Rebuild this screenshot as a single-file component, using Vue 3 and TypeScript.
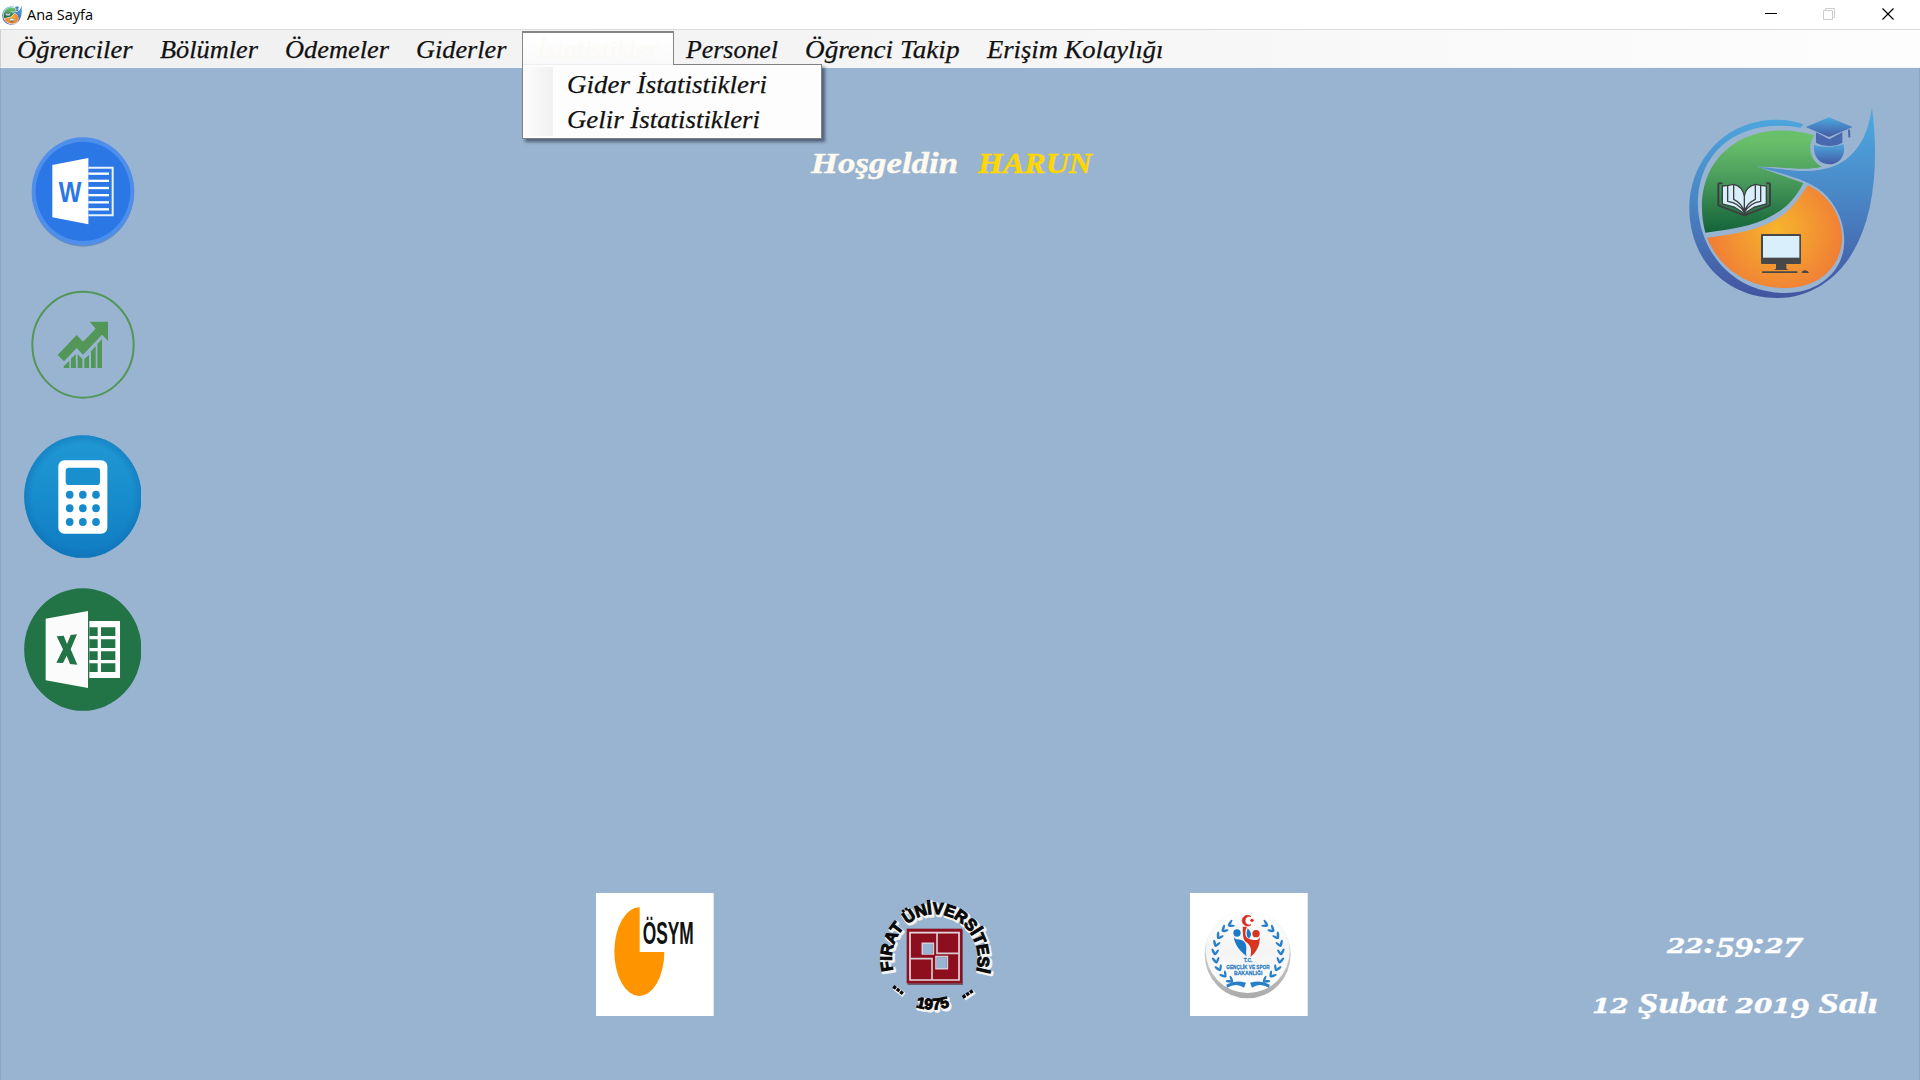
<script setup lang="ts">
import { h, ref } from 'vue'

interface Label { text: string; width: number; gap: number }

interface CaptionProps {
  text: string
  width: number
  size: number
  height: number
  baseline: number
  oldstyle?: boolean
}

// Lowered numerals: 0, 1 and 2 sit at x-height, the others hang under the baseline.
function glyphs(text: string, size: number) {
  let shift = 0
  return text.split(/(\d)/).filter(Boolean).map((part) => {
    const low = /[3-579]/.test(part)
    const small = /[0-2]/.test(part)
    const target = low ? size * 0.16 : 0
    const dy = target - shift
    shift = target
    return h('tspan', {
      dy,
      'font-size': small ? size * 0.71 : size,
      style: small ? 'font-family:"DejaVu Serif",serif' : undefined,
    }, part)
  })
}

// A label whose text is fitted to a fixed width.
const Caption = (p: CaptionProps) =>
  h('svg', { width: p.width, height: p.height, class: 'caption', style: 'overflow:visible;display:block;flex:none' }, [
    h('text', {
      x: 0, y: p.baseline, 'font-size': p.size, textLength: p.width,
      lengthAdjust: 'spacingAndGlyphs', fill: 'currentColor', 'xml:space': 'preserve',
    }, p.oldstyle ? glyphs(p.text, p.size) : p.text),
  ])
Caption.props = ['text', 'width', 'size', 'height', 'baseline', 'oldstyle']

const leading: Label[] = [
  { text: 'Öğrenciler', width: 115.5, gap: 15.5 },
  { text: 'Bölümler', width: 98, gap: 27.5 },
  { text: 'Ödemeler', width: 104, gap: 27 },
  { text: 'Giderler', width: 90.5, gap: 27.5 },
]
const trailing: Label[] = [
  { text: 'Personel', width: 92, gap: 12.7 },
  { text: 'Öğrenci Takip', width: 154.5, gap: 27.3 },
  { text: 'Erişim Kolaylığı', width: 176.5, gap: 27.5 },
]
const submenu = [
  { text: 'Gider İstatistikleri', width: 200 },
  { text: 'Gelir İstatistikleri', width: 193 },
]
const time = ref('22:59:27')
const date = ref('12 Şubat 2019 Salı')

const keys = [0, 1, 2].flatMap((r) => [0, 1, 2].map((c) => ({ x: 208 + c * 39.5, y: 224 + r * 41 })))
const cells = [621, 657, 693, 729]
const lines = [162, 183.5, 205, 226.5, 248, 269]

// Leaves of the wreath along the left half; the right half is mirrored.
const leaves = Array.from({ length: 9 }, (_, i) => {
  const deg = 120 + i * 14.5
  const a = (deg * Math.PI) / 180
  return { x: 219 + Math.cos(a) * 99, y: 217 - Math.sin(a) * 99, r: 180 - deg }
})
</script>

<template>
  <div class="window">
    <header class="titlebar">
      <svg class="favicon" viewBox="20 315 570 585" preserveAspectRatio="none"><use href="#crest" /></svg>
      <Caption class="title" text="Ana Sayfa" :width="66" :size="14.8" :height="29" :baseline="20" />
      <svg class="controls" width="156" height="29" viewBox="0 0 156 29" fill="none">
        <path d="M1 13.5h12" stroke="#000" />
        <path d="M59.500 10.500h9v9h-9zM61.500 10v-1.500h9v9h-2" stroke="#ccc" />
        <path d="M118.500 8.500l11 11m0-11l-11 11" stroke="#000" stroke-width="1.200" />
      </svg>
    </header>

    <nav class="menubar">
      <Caption v-for="m in leading" :key="m.text" :text="m.text" :width="m.width" :size="26" :height="37" :baseline="28"
        :style="{ marginLeft: m.gap + 'px' }" />
      <div class="active">
        <Caption class="faint" text="İstatistikler" :width="121" :size="26" :height="32" :baseline="25" />
        <div class="dropdown">
          <div v-for="s in submenu" :key="s.text" class="entry">
            <Caption :text="s.text" :width="s.width" :size="26" :height="35" :baseline="26.5" />
          </div>
        </div>
      </div>
      <Caption v-for="m in trailing" :key="m.text" :text="m.text" :width="m.width" :size="26" :height="37" :baseline="28"
        :style="{ marginLeft: m.gap + 'px' }" />
    </nav>

    <main>
      <section class="upper">
        <div class="tools">
          <svg class="tile" viewBox="71 31 353 369" preserveAspectRatio="none">
            <ellipse cx="248" cy="219" rx="153" ry="162" fill="#5f7fae" opacity=".75" />
            <ellipse cx="248" cy="215" rx="154" ry="162" fill="#4f8fec" />
            <ellipse cx="248" cy="215" rx="142" ry="149" fill="#2b77e5" />
            <path d="M156 136L264 115V314L156 293Z" fill="#fff" />
            <path d="M264 144H337V287H264" fill="none" stroke="#e9f1fd" stroke-width="6" />
            <path v-for="y in lines" :key="y" :d="`M264 ${y}H326`" stroke="#fff" stroke-width="7" />
            <text x="175" y="247" font-size="91" textLength="68" lengthAdjust="spacingAndGlyphs" fill="#2b77e5" class="sans">W</text>
          </svg>
          <svg class="tile" viewBox="71 487 353 369" preserveAspectRatio="none">
            <ellipse cx="248" cy="672" rx="152" ry="159" fill="none" stroke="#529658" stroke-width="6" />
            <path d="M172 703L229 643L248 663L286 624L268 603H323V661L305 642L248 702L229 682L191 722Z" fill="#529658" />
            <path d="M190 742V737L207 721V742ZM212 742V714L226 701L227 742ZM232 742V701L246 715V742ZM252 742V715L266 703V742ZM272 742V692L286 677V742ZM291 742V670L305 655V742Z" fill="#529658" />
          </svg>
          <svg class="tile" viewBox="71 45 353 369" preserveAspectRatio="none">
            <defs>
              <linearGradient id="calcFill" x2="0" y2="1"><stop stop-color="#2199d4" /><stop offset=".5" stop-color="#188dcd" /><stop offset="1" stop-color="#117bc1" /></linearGradient>
              <radialGradient id="calcEdge"><stop offset=".85" stop-color="#0f70b7" stop-opacity="0" /><stop offset="1" stop-color="#0f70b7" stop-opacity=".5" /></radialGradient>
            </defs>
            <ellipse cx="247.500" cy="229.500" rx="176" ry="184" fill="url(#calcFill)" />
            <ellipse cx="247.500" cy="229.500" rx="176" ry="184" fill="url(#calcEdge)" />
            <rect x="174" y="121" width="147" height="220" rx="18" fill="#fff" />
            <rect x="196" y="143" width="103" height="52" rx="10" fill="#1a8fce" />
            <ellipse v-for="(k, i) in keys" :key="i" :cx="k.x" :cy="k.y" rx="11.500" ry="12" fill="#168acb" />
          </svg>
          <svg class="tile" viewBox="71 503 353 369" preserveAspectRatio="none">
            <ellipse cx="247.500" cy="687.500" rx="176" ry="184" fill="#227447" />
            <path d="M136 595L263 572V803L136 780Z" fill="#fbfbfb" />
            <path d="M267 602H359V773H267Z" fill="#fff" />
            <path v-for="y in cells" :key="y" :d="`M267 ${y}h25v26h-25zM302 ${y}h43v26h-43z`" fill="#227447" />
            <path d="M169 648L190 646L200 671L211 644L230 642L211 687L231 733L209 731L199 706L188 728L168 727L188 687Z" fill="#227447" />
          </svg>
        </div>

        <div class="greeting">
          <Caption class="hello" text="Hoşgeldin" :width="147" :size="30" :height="40" :baseline="29" />
          <Caption class="user" text="HARUN" :width="114" :size="30" :height="40" :baseline="29" />
        </div>

        <svg class="crest" viewBox="20 315 570 585" preserveAspectRatio="none">
          <defs>
            <linearGradient id="blue" gradientUnits="userSpaceOnUse" x1="0" y1="340" x2="0" y2="890"><stop stop-color="#4da8df" /><stop offset=".5" stop-color="#4983c4" /><stop offset="1" stop-color="#4355a0" /></linearGradient>
            <linearGradient id="green" gradientUnits="userSpaceOnUse" x1="0" y1="390" x2="0" y2="700"><stop offset=".1" stop-color="#6abf6b" /><stop offset=".5" stop-color="#47995a" /><stop offset="1" stop-color="#126238" /></linearGradient>
            <radialGradient id="orange" gradientUnits="userSpaceOnUse" cx="290" cy="690" r="205"><stop stop-color="#f6b52c" /><stop offset="1" stop-color="#f07d36" /></radialGradient>
            <linearGradient id="cap" x2="0" y2="1"><stop stop-color="#4da8df" /><stop offset="1" stop-color="#435ba5" /></linearGradient>
            <g id="crest">
              <path d="M369 373C329 357 279 356 232 365C112 389 27 496 27 625C27 778 137 894 291 894C388 894 470 839 519 754C565 674 586 569 584 440C583 397 580 358 575 323C566 376 554 416 525 451C484 502 423 518 345 512C306 509 268 502 231 500C325 527 397 542 441 590C483 636 497 695 490 746C478 825 406 879 315 879C211 879 130 824 86 743C58 690 45 619 57 562C77 454 157 391 263 379C300 375 334 378 361 383Z" fill="url(#blue)" />
              <path d="M75 698C51 606 68 509 138 449C206 389 306 378 402 406C381 433 386 480 424 500C373 514 309 500 231 500L369 549C337 617 277 656 204 676C159 688 116 692 75 698Z" fill="url(#green)" />
              <path d="M80 713C172 702 258 687 314 640C343 616 363 587 382 556C442 582 482 645 485 705C489 797 417 863 319 864C204 865 118 807 80 713Z" fill="url(#orange)" />
              <path d="M401 434C425 443 464 443 489 431C498 464 480 492 447 493C415 491 398 468 401 434Z" fill="url(#cap)" />
              <path d="M407 397L447 418L486 397V428C464 441 430 441 407 428Z" fill="#4868b0" />
              <path d="M376 381L446 352L517 381L446 411Z" fill="url(#cap)" />
              <path d="M506 389L507 412" stroke="#4868b0" stroke-width="6" />
              <path d="M114 550V616L192 646L269 616V550M114 550H126M258 550H269" fill="none" stroke="#3d4042" stroke-width="6" />
              <path d="M126 558L144 556L160 553C177 557 189 571 192 588C195 571 207 557 225 553L241 556L258 558V612L222 621L192 641L162 621L126 612Z" fill="#d9f0fc" stroke="#3d4042" stroke-width="4" />
              <path d="M142 556V604C165 607 181 617 192 638M160 553V598C177 606 189 622 192 638C195 622 207 606 225 598V553M241 556V604C219 607 203 617 192 638M192 586V640" fill="none" stroke="#3d4042" stroke-width="4" />
              <rect x="242" y="702" width="120" height="90" rx="3" fill="#474849" />
              <rect x="248" y="708" width="109" height="65" fill="#d9f0fc" />
              <path d="M287 792h31v14l6 4h-43l6-4zM245 814h106v5H245zM364 819q1-8 10-8t12 8z" fill="#474849" />
            </g>
          </defs>
          <use href="#crest" />
        </svg>
      </section>

      <footer>
        <svg class="partner osym" viewBox="49 39 353 369" preserveAspectRatio="none">
          <rect x="49" y="39" width="353" height="369" fill="#fff" />
          <path d="M180 82A75 133 0 1 0 254 216H180Z" fill="#fe9500" />
          <text transform="translate(189 193) scale(1 1.78)" font-size="52" fill="#111" class="sans">ÖSYM</text>
        </svg>

        <svg class="partner firat" viewBox="49 39 353 369" preserveAspectRatio="none">
          <defs>
            <path id="arc" d="M101 271A129 134 0 1 1 350 271" />
            <path id="arcLow" d="M168 381Q222 396 276 379" />
          </defs>
          <g fill="none" stroke="#f4f3f0" stroke-width="10" stroke-linejoin="round" class="sans" transform="translate(4 5)" aria-hidden="true">
            <text font-size="49"><textPath href="#arc" textLength="486" lengthAdjust="spacing">FIRAT ÜNİVERSİTESİ</textPath></text>
            <text font-size="46"><textPath href="#arcLow" textLength="103" lengthAdjust="spacingAndGlyphs">1975</textPath></text>
            <path d="M101 318L129 340M310 350L340 330" stroke-width="15" />
          </g>
          <g fill="#080808" stroke="#080808" stroke-width="3" class="sans">
            <text font-size="49"><textPath href="#arc" textLength="486" lengthAdjust="spacing">FIRAT ÜNİVERSİTESİ</textPath></text>
            <text font-size="46"><textPath href="#arcLow" textLength="103" lengthAdjust="spacingAndGlyphs">1975</textPath></text>
          </g>
          <path d="M101 319L130 341M309 352L341 331" stroke="#080808" stroke-width="10" stroke-dasharray="10 3" />
          <rect x="144" y="149" width="166" height="166" fill="#6f5a6b" />
          <rect x="141" y="146" width="166" height="164" fill="#8d1020" />
          <path d="M151 158H298V300H151Z" fill="#8d0e1c" stroke="#e5d9df" stroke-width="5" />
          <path d="M232 158V220H298M151 236H217V300M188 222V190H221V222ZM229 230H263V266H229Z" fill="none" stroke="#d7cdd8" stroke-width="5" />
          <path d="M190 192h29v30h-29zM230 232h31v32h-31z" fill="#99b4d1" />
        </svg>

        <svg class="partner ministry" viewBox="45 39 353 369" preserveAspectRatio="none">
          <defs>
            <linearGradient id="disc" x2="0" y2="1"><stop stop-color="#fff" /><stop offset=".5" stop-color="#f4f4f5" /><stop offset="1" stop-color="#fff" /></linearGradient>
            <linearGradient id="rim" x2="0" y2="1"><stop stop-color="#e8e8e8" /><stop offset="1" stop-color="#aaa" /></linearGradient>
            <g id="half">
              <g v-for="(l, i) in leaves" :key="i" :transform="`translate(${l.x} ${l.y}) rotate(${l.r})`">
                <ellipse cx="-5" rx="3.800" ry="11" transform="rotate(-28)" />
                <ellipse cx="6" rx="3.500" ry="10" transform="rotate(32)" />
              </g>
              <path d="M154 314Q180 298 213 308L207 323Q184 307 156 323Z" />
            </g>
          </defs>
          <rect x="45" y="39" width="353" height="369" fill="#fff" />
          <ellipse cx="218" cy="223" rx="129" ry="132" fill="url(#rim)" />
          <ellipse cx="218" cy="213" rx="126" ry="126" fill="url(#disc)" />
          <g fill="#2a7fc9"><use href="#half" /><use href="#half" transform="translate(438 0) scale(-1 1)" /></g>
          <path d="M228 110A16 16 0 1 0 228 134A13 13 0 1 1 228 110Z" fill="#de2b22" stroke="#de2b22" stroke-width="2" />
          <circle cx="231" cy="121" r="5" fill="#de2b22" />
          <circle cx="186" cy="159" r="11" fill="#1d78c7" /><circle cx="243" cy="161" r="11" fill="#d73422" />
          <path d="M176 166C176 184 194 174 206 184C220 196 210 212 215 229C198 216 176 194 176 166Z" fill="#1d78c7" />
          <path d="M254 170C256 198 242 218 226 231C232 207 226 194 210 184C202 172 204 154 203 140H216C208 157 210 172 222 177C237 181 250 184 254 170Z" fill="#d73422" />
          <path d="M218 145Q236 162 222 176Q210 168 218 145Z" fill="#1d78c7" />
          <g fill="#2b7dc5" stroke="#2b7dc5" stroke-width=".8" class="sans">
            <text x="206" y="247" font-size="18" textLength="26" lengthAdjust="spacingAndGlyphs">T.C.</text>
            <text x="154" y="266" font-size="18" textLength="130" lengthAdjust="spacingAndGlyphs">GENÇLİK VE SPOR</text>
            <text x="177" y="284" font-size="18" textLength="85" lengthAdjust="spacingAndGlyphs">BAKANLIĞI</text>
          </g>
        </svg>

        <div class="clock">
          <Caption :text="time" :width="135" :size="30" :height="60" :baseline="30.5" :oldstyle="true" />
          <Caption :text="date" :width="286" :size="30" :height="60" :baseline="31" :oldstyle="true" />
        </div>
      </footer>
    </main>
  </div>
</template>

<style>
body { margin: 0; overflow: hidden; }
</style>

<style scoped>
.window { width: 1920px; height: 1080px; display: flex; flex-direction: column; background: #99b4d1; font-family: "Liberation Serif", serif; }
.titlebar { height: 29px; flex: none; display: flex; align-items: center; background: #fff; border-bottom: 1px solid #d9dddd; }
.favicon { width: 20px; height: 20px; margin-left: 2px; }
.title { margin-left: 5px; font-family: "Open Sans", sans-serif; color: #000; }
.controls { margin-left: auto; }
.menubar { height: 38px; flex: none; display: flex; align-items: flex-start; box-sizing: border-box; border-left: 1px solid #d0d0d0; border-bottom: 1px solid #f2f4f7; background: linear-gradient(90deg, #f0f0f0, #f5f5f5 50%, #fdfdfd); font-style: italic; color: #111; stroke: #111; stroke-width: .25px; }
.active { position: relative; box-sizing: border-box; width: 152px; height: 34px; margin: 1px 0 0 15px; padding: 0 0 0 14px; border: 1px solid #858585; border-top-width: 2px; border-bottom: 0; background: linear-gradient(#fff, #fafafa); z-index: 2; }
.faint { color: #fcfaf5; stroke: none; }
.dropdown { position: absolute; left: -1px; top: 31px; width: 300px; height: 75px; box-sizing: border-box; padding: 1px; border: 1px solid #808080; background: linear-gradient(90deg, #fcfcfc, #f1f1f1) 1px 2px / 29px 69px no-repeat, #fdfdfd; box-shadow: 3px 3px 3px rgba(40, 55, 75, .65); color: #111; }
.dropdown::before { content: ""; position: absolute; left: 0; top: -1px; width: 150px; height: 1px; background: #eee; }
.entry { padding-left: 43.5px; }
main { flex: 1; display: flex; flex-direction: column; justify-content: space-between; box-sizing: border-box; border: solid #8ca5c0; border-width: 0 1px; }
.upper { display: flex; align-items: flex-start; }
.tools { display: flex; flex-direction: column; gap: 29.5px; margin: 62.3px 0 0 22.6px; }
.tile { width: 117.7px; height: 123px; }
.greeting { display: flex; gap: 20px; margin: 76px 0 0 670px; font-weight: bold; font-style: italic; stroke-width: .4px; }
.hello { color: #fffaf0; stroke: #fffaf0; }
.user { color: #ffd700; stroke: #ffd700; }
.crest { width: 190px; height: 195px; margin: 37px 0 0 594.6px; flex: none; }
footer { display: flex; align-items: flex-start; height: 187px; }
.partner { width: 117.7px; height: 123px; flex: none; }
.osym { margin-left: 595.3px; }
.firat { margin-left: 162.300px; }
.ministry { margin-left: 196px; }
.clock { display: flex; flex-direction: column; align-items: center; margin: 28.500px 0 0 284px; color: #fff; stroke: #fff; stroke-width: .4px; font-weight: bold; font-style: italic; }
.sans { font-family: "Liberation Sans", sans-serif; font-weight: bold; }
</style>
